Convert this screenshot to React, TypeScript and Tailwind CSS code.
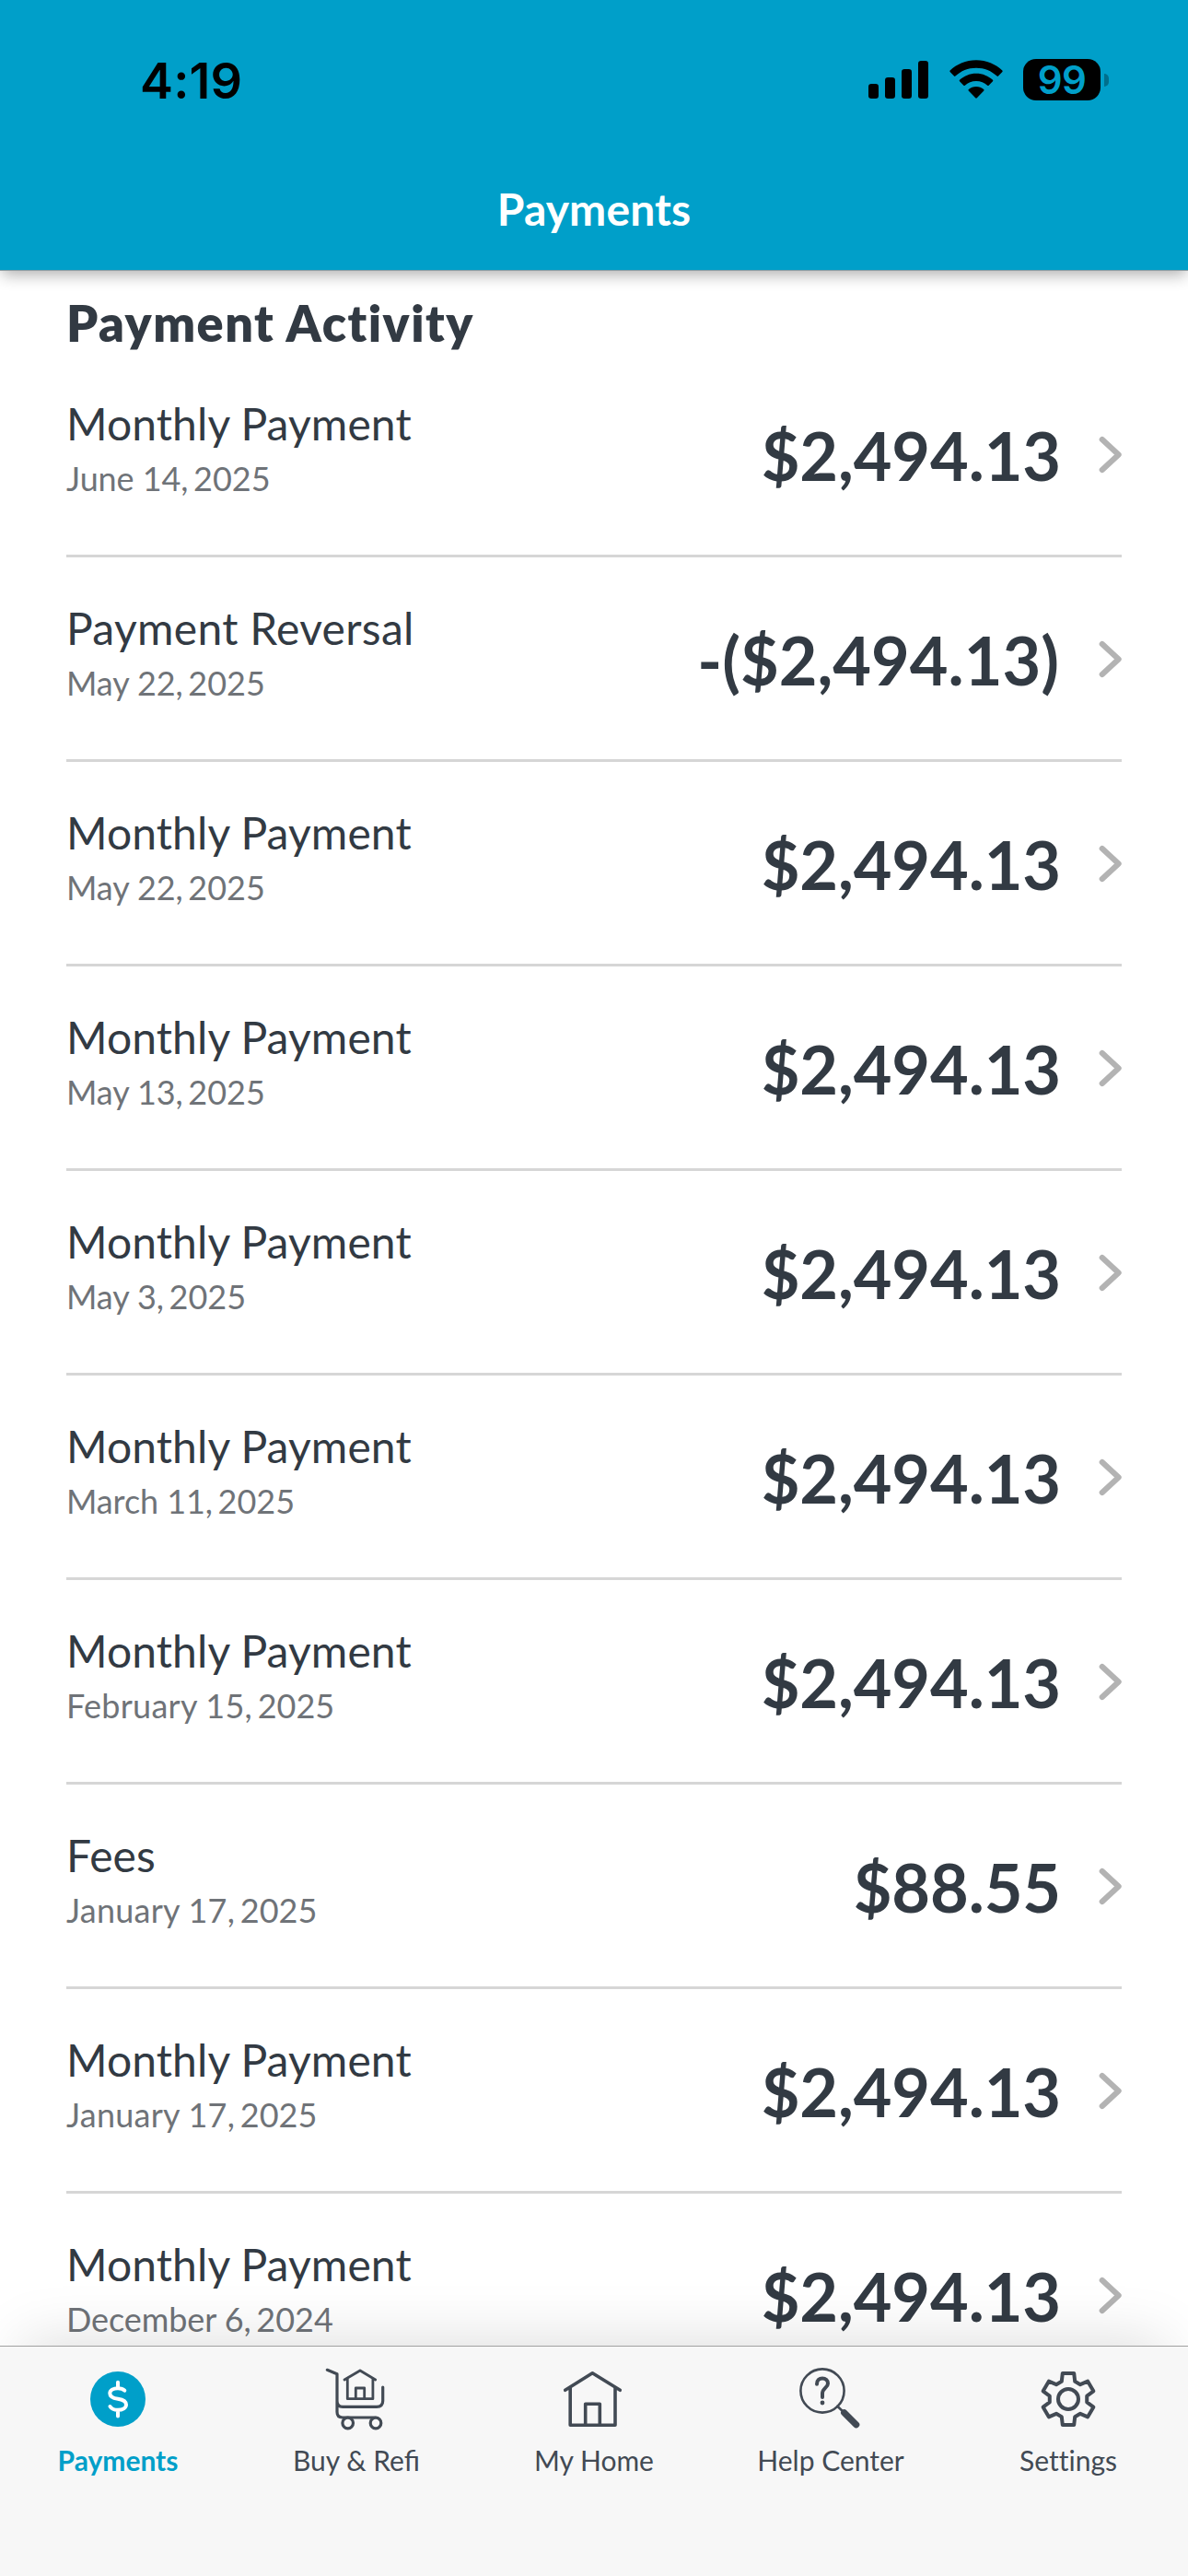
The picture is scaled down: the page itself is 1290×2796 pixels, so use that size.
import type { ReactNode } from "react";

type Activity = { title: string; day: string; year: string; amount: string };

const activity: Activity[] = [
  { title: "Monthly Payment", day: "June 14,", year: "2025", amount: "$2,494.13" },
  { title: "Payment Reversal", day: "May 22,", year: "2025", amount: "-($2,494.13)" },
  { title: "Monthly Payment", day: "May 22,", year: "2025", amount: "$2,494.13" },
  { title: "Monthly Payment", day: "May 13,", year: "2025", amount: "$2,494.13" },
  { title: "Monthly Payment", day: "May 3,", year: "2025", amount: "$2,494.13" },
  { title: "Monthly Payment", day: "March 11,", year: "2025", amount: "$2,494.13" },
  { title: "Monthly Payment", day: "February 15,", year: "2025", amount: "$2,494.13" },
  { title: "Fees", day: "January 17,", year: "2025", amount: "$88.55" },
  { title: "Monthly Payment", day: "January 17,", year: "2025", amount: "$2,494.13" },
  { title: "Monthly Payment", day: "December 6,", year: "2024", amount: "$2,494.13" },
];

function StatusBar() {
  return (
    <div className="flex h-[173px] items-center justify-between pr-[86px] pl-[152px] font-['Inter',sans-serif]">
      <span className="pt-[3px] text-[54px] leading-[60px] font-semibold tracking-[0.2px] text-black">4:19</span>
      <div className="flex items-center">
        <svg className="h-[45px] w-[66px]" viewBox="0 0 66 45">
          <rect x="0" y="27" width="11" height="16" rx="3.2" />
          <rect x="18" y="20" width="11" height="23" rx="3.2" />
          <rect x="36" y="11" width="11" height="32" rx="3.2" />
          <rect x="54" y="2" width="11" height="41" rx="3.2" />
        </svg>
        <svg className="ml-[22px] h-[45px] w-[58px]" viewBox="0 0 58 45">
          <path d="M29 1.3C18 1.3 7.900 5.600.6 12.600Q0 13.300.6 14L5 18.600Q5.700 19.200 6.400 18.600C12.300 13 20.200 9.700 29 9.700S45.700 13 51.600 18.600Q52.300 19.200 53 18.600L57.400 14Q58 13.300 57.400 12.600C50.100 5.600 40 1.300 29 1.300Z" />
          <path d="M29 15.700C22 15.700 15.700 18.400 11 22.800Q10.300 23.500 11 24.200L15.400 28.700Q16.100 29.300 16.800 28.700C20 25.700 24.300 24 29 24S38 25.700 41.200 28.700Q41.900 29.300 42.600 28.700L47 24.200Q47.700 23.500 47 22.800C42.300 18.400 36 15.700 29 15.700Z" />
          <path d="M29 30C25.900 30 23 31.100 20.800 33Q20 33.700 20.700 34.400L28.200 42.300Q29 43.100 29.800 42.300L37.300 34.400Q38 33.700 37.200 33C35 31.100 32.100 30 29 30Z" />
        </svg>
        <div className="ml-[22px] flex h-[45px] w-[84px] items-center justify-center rounded-[14px] bg-black text-[42px] leading-[45px] font-semibold tracking-[-0.5px] text-[#009fc9]">
          99
        </div>
        <div className="ml-1 h-3.5 w-[5px] rounded-r-full bg-black/30" />
      </div>
    </div>
  );
}

function Chevron() {
  return (
    <svg className="h-[42px] w-[26px]" viewBox="0 0 26 42" fill="none" stroke="#b3b3b3" strokeWidth="6.2" strokeLinecap="round" strokeLinejoin="round">
      <path d="M4.800 5L22.600 21.500L4.800 38" />
    </svg>
  );
}

function ActivityRow({ item }: { item: Activity }) {
  const isReversal = item.title === "Payment Reversal";
  const isLongMonth = item.day.includes("uary");
  return (
    <li className="flex h-[222px] items-center border-b-3 border-[#d6d6d6] pt-px">
      <div className="flex-1 self-start pt-[46px]">
        <div className={isReversal ? "text-[48px] leading-[60px] tracking-[0.3px]" : "text-[48px] leading-[60px] tracking-[0.1px]"}>
          {item.title}
        </div>
        <div className="mt-[7px] text-[36px] leading-[44px] text-[#6f7378]">
          <span className={isLongMonth ? "tracking-[0.25px]" : "tracking-[-0.08px]"}>{item.day}</span>{" "}
          <span className="-ml-[3.5px]">{item.year}</span>
        </div>
      </div>
      <div className={isReversal ? "mr-[42px] pt-[2px] text-[72px] leading-[88px] font-bold" : "mr-[40px] pt-[2px] text-[72px] leading-[88px] font-bold tracking-[-0.1px]"}>
        {item.amount}
      </div>
      <Chevron />
    </li>
  );
}

function TabIcon({ children, width = 3.6 }: { children: ReactNode; width?: number }) {
  return (
    <svg className="size-[72px]" viewBox="0 0 72 72" fill="none" stroke="#424a54" strokeWidth={width} strokeLinecap="round" strokeLinejoin="round">
      {children}
    </svg>
  );
}

const gearTooth: [number, number][] = [[-7.2, -19.2], [-6.2, -28], [6.2, -28], [7.2, -19.2]];

const gearPoints = [0, 1, 2, 3, 4, 5]
  .flatMap((k) => {
    const c = Math.cos((k * Math.PI) / 3);
    const s = Math.sin((k * Math.PI) / 3);
    return gearTooth.map(([x, y]) => `${(35 + x * c - y * s).toFixed(2)},${(36 + x * s + y * c).toFixed(2)}`);
  })
  .join(" ");

const tabs = [
  {
    label: "Payments",
    labelClass: "mr-[2px] font-bold text-[#009fc9]",
    icon: (
      <TabIcon width={4}>
        <circle cx="35" cy="36" r="30" fill="#009fc9" stroke="none" />
        <path stroke="#fff" d="M35 17.700V24M35 48V54.500M42.300 26.700C40.500 24.800 38 24.200 35 24.200C30 24.200 26.300 26.300 26.300 29.700C26.300 33.200 29 34.800 35 35.700C41 36.600 44 38.400 44 42C44 45.600 40 47.800 35 47.800C31 47.800 28.200 46.700 26.500 44" />
      </TabIcon>
    ),
  },
  {
    label: "Buy & Refi",
    labelClass: "text-[#424a54]",
    icon: (
      <TabIcon width={3.2}>
        <path d="M4.300 4.300L15 8.700V50Q15 56 21 56H54Q60 56 62 60M15 38Q15 44.300 21 44.300H58Q64.700 44.300 64.700 38V23" />
        <path strokeWidth="2.8" d="M23 15L40 5L56.700 15M26.300 14V35.700H53.900V14M35.300 35V24H44.700V35" />
        <circle cx="26.7" cy="62" r="5.8" fill="#f7f7f7" />
        <circle cx="57" cy="62" r="5.8" fill="#f7f7f7" />
      </TabIcon>
    ),
  },
  {
    label: "My Home",
    labelClass: "text-[#424a54]",
    icon: (
      <TabIcon>
        <path d="M4.700 26.300L34.300 7.700L64.300 26.300M10.200 24V64.200H59V24M26.700 63V41.300H42.300V63" />
      </TabIcon>
    ),
  },
  {
    label: "Help Center",
    labelClass: "mr-[2px] text-[#424a54]",
    icon: (
      <TabIcon width={2.6}>
        <circle cx="26" cy="27" r="23.6" />
        <path d="M42.300 43.700L49 50" />
        <path strokeWidth="7.2" d="M49.700 50.700L62.700 63.700" />
        <path strokeWidth="4" d="M20 19.700C20 15.500 22.600 13.500 26 13.500C29.500 13.500 32 15.700 32 19C32 23.500 26 24 26 30V34" />
        <circle cx="26" cy="40" r="2.4" fill="#424a54" stroke="none" />
      </TabIcon>
    ),
  },
  {
    label: "Settings",
    labelClass: "mr-[2px] text-[#424a54] [font-variant-ligatures:none]",
    icon: (
      <TabIcon width={4}>
        <polygon points={gearPoints} />
        <circle cx="35" cy="36" r="11" />
      </TabIcon>
    ),
  },
];

export default function App() {
  return (
    <div className="flex h-[2796px] w-[1290px] flex-col overflow-hidden bg-white font-['Lato',sans-serif] text-[#323a43]">
      <header className="relative z-10 h-[294px] shrink-0 border-b border-[#8f9ea3] bg-[#009fc9] shadow-[0_6px_16px_-2px_rgba(0,0,0,0.32)]">
        <StatusBar />
        <h1 className="mt-[24px] text-center text-[48px] leading-[60px] font-bold tracking-[0.1px] text-white">Payments</h1>
      </header>

      <main className="min-h-0 flex-1 overflow-hidden px-[72px]">
        <h2 className="h-[89px] pt-[23px] text-[54px] leading-[68px] font-extrabold tracking-[1.5px]">Payment Activity</h2>
        <ul>
          {activity.map((item, i) => (
            <ActivityRow key={i} item={item} />
          ))}
        </ul>
      </main>

      <nav className="relative z-10 grid h-[250px] shrink-0 grid-cols-5 border-t border-[#a0a0a0] bg-[#f7f7f7] shadow-[0_-30px_60px_-24px_rgba(0,0,0,0.13)]">
        {tabs.map((tab) => (
          <div key={tab.label} className="flex flex-col items-center pt-[21px]">
            {tab.icon}
            <span className={`mt-[10px] text-[30px] leading-[40px] ${tab.labelClass}`}>{tab.label}</span>
          </div>
        ))}
      </nav>
    </div>
  );
}
